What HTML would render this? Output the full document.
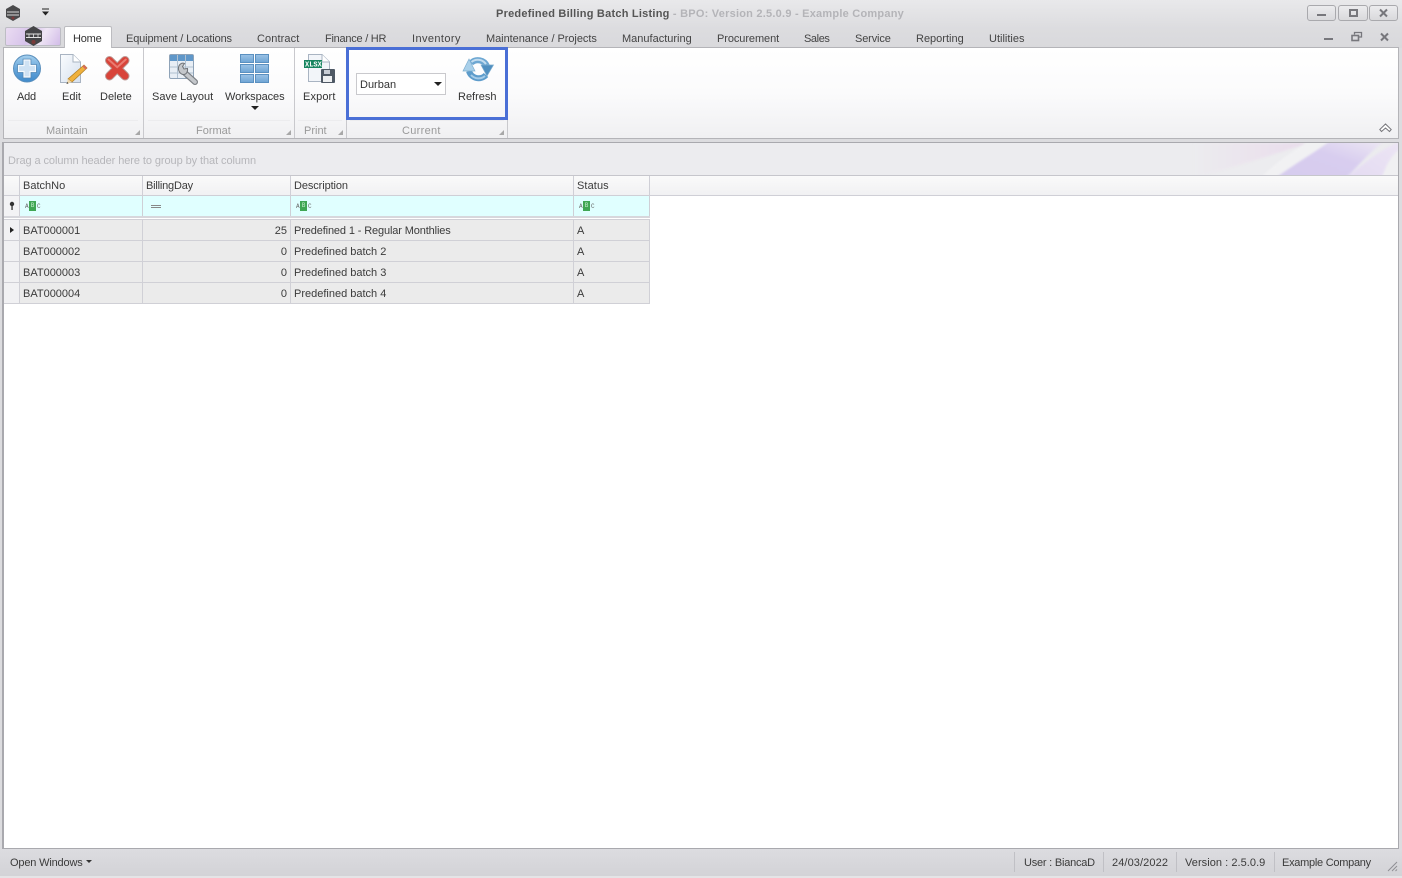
<!DOCTYPE html>
<html><head><meta charset="utf-8"><style>
html,body{margin:0;padding:0}
body{width:1402px;height:878px;position:relative;overflow:hidden;background:#dcdcdf;font:11px/13px "Liberation Sans",sans-serif;color:#3b3b3b}
.a{position:absolute}
.t{position:absolute;white-space:nowrap;line-height:13px}
.tab{top:33px;color:#444}
.lb{color:#333;top:91px}
.gl{color:#9a9a9a;top:125px}
.corner{position:absolute;width:0;height:0;border-left:5px solid transparent;border-bottom:5px solid #a8a8a8}
.l{position:absolute;top:202px;font:6px/9px "Liberation Mono",monospace;color:#666}
.b{position:absolute;top:201px;width:7px;height:10px;background:#3fa654;color:#c5eccd;font:6px/10px "Liberation Mono",monospace;text-align:center}
svg{position:absolute;overflow:visible}
</style></head><body>

<div class="a" style="left:0;top:0;width:1402px;height:48px;background:linear-gradient(#e9e9eb,#dcdcdf 60%,#d9d9dc)"></div>

<svg style="left:5px;top:5px" width="16" height="17" viewBox="0 0 16 17"><path d="M8 0 15 4V12L8 16 1 12V4Z" fill="#4a4a4c"/><path d="M2 7H14M2 10H14" stroke="#d8d8d8" stroke-width="1"/><circle cx="8" cy="13" r="1.5" fill="#7a3a3a"/></svg>
<svg style="left:41px;top:9px" width="9" height="8"><path d="M1 0H8" stroke="#222"/><path d="M1 2.5H8L4.5 6.5Z" fill="#222"/></svg>

<div class="t" style="left:496px;top:8px;font-weight:bold;color:#555;letter-spacing:.23px">Predefined Billing Batch Listing<span style="color:#b4b4b8"> - BPO: Version 2.5.0.9 - Example Company</span></div>

<div class="a" style="left:1307px;top:5px;width:27px;height:14px;border:1px solid #a9a9ad;border-radius:3px;background:linear-gradient(#ececee,#d9d9dc)"></div>
<div class="a" style="left:1338px;top:5px;width:28px;height:14px;border:1px solid #a9a9ad;border-radius:3px;background:linear-gradient(#ececee,#d9d9dc)"></div>
<div class="a" style="left:1369px;top:5px;width:27px;height:14px;border:1px solid #a9a9ad;border-radius:3px;background:linear-gradient(#ececee,#d9d9dc)"></div>
<div class="a" style="left:1317px;top:14px;width:9px;height:2px;background:#77777c"></div>
<div class="a" style="left:1349px;top:9px;width:5px;height:4px;border:2px solid #77777c"></div>
<svg style="left:1379px;top:9px" width="9" height="8"><path d="M1 0.5 8 7.5M8 0.5 1 7.5" stroke="#77777c" stroke-width="2"/></svg>

<div class="a" style="left:1324px;top:38px;width:9px;height:1.5px;background:#77777c"></div>
<svg style="left:1351px;top:32px" width="11" height="10"><path d="M3.5 2.5V.5H10.5V5H8" fill="none" stroke="#77777c" stroke-width="1.3"/><rect x="1" y="3.5" width="6.5" height="5" fill="none" stroke="#77777c" stroke-width="1.6"/></svg>
<svg style="left:1380px;top:33px" width="9" height="8"><path d="M1 .5 8 7.5M8 .5 1 7.5" stroke="#77777c" stroke-width="2"/></svg>

<div class="a" style="left:5px;top:27px;width:54px;height:17px;border:1px solid #bdbdc4;border-radius:2px;background:linear-gradient(120deg,#eadcf2,#d6c2ea 45%,#efe6f5 65%,#d2bce8)"></div>
<svg style="left:24px;top:26px" width="19" height="21" viewBox="0 0 19 21"><path d="M9.5 0 18 5V15L9.5 20 1 15V5Z" fill="#454547"/><path d="M2 8H17M2 11.5H17" stroke="#e2e2e2" stroke-width="1"/><path d="M5 8V11.5M9.5 8V11.5M14 8V11.5" stroke="#e2e2e2" stroke-width=".8"/><circle cx="9.5" cy="16" r="2" fill="#7a3a3a"/></svg>

<div class="a" style="left:3px;top:47px;width:1396px;height:92px;box-sizing:border-box;border:1px solid #b4b4b8;background:linear-gradient(#ffffff,#fbfbfc 50%,#f0f0f2)"></div>
<div class="a" style="left:64px;top:26px;width:48px;height:22px;box-sizing:border-box;border:1px solid #bcbcc0;border-bottom:0;border-radius:2px 2px 0 0;background:#fff"></div>

<div class="t tab" style="left:73px;color:#333;letter-spacing:-.2px">Home</div>
<div class="t tab" style="left:126px;letter-spacing:-.14px">Equipment / Locations</div>
<div class="t tab" style="left:257px;letter-spacing:.1px">Contract</div>
<div class="t tab" style="left:325px;letter-spacing:-.25px">Finance / HR</div>
<div class="t tab" style="left:412px;letter-spacing:.4px">Inventory</div>
<div class="t tab" style="left:486px;letter-spacing:-.05px">Maintenance / Projects</div>
<div class="t tab" style="left:622px">Manufacturing</div>
<div class="t tab" style="left:717px;letter-spacing:-.08px">Procurement</div>
<div class="t tab" style="left:804px;letter-spacing:-.4px">Sales</div>
<div class="t tab" style="left:855px;letter-spacing:-.14px">Service</div>
<div class="t tab" style="left:916px">Reporting</div>
<div class="t tab" style="left:989px">Utilities</div>

<div class="a" style="left:143px;top:48px;width:1px;height:90px;background:#c9c9cd"></div>
<div class="a" style="left:294px;top:48px;width:1px;height:90px;background:#c9c9cd"></div>
<div class="a" style="left:346px;top:48px;width:1px;height:90px;background:#c9c9cd"></div>
<div class="a" style="left:507px;top:48px;width:1px;height:90px;background:#c9c9cd"></div>
<div class="a" style="left:8px;top:120px;width:130px;height:1px;background:#ececee"></div>
<div class="a" style="left:148px;top:120px;width:142px;height:1px;background:#ececee"></div>
<div class="a" style="left:298px;top:120px;width:44px;height:1px;background:#ececee"></div>
<div class="a" style="left:350px;top:120px;width:154px;height:1px;background:#ececee"></div>

<svg style="left:13px;top:54px" width="29" height="29" viewBox="0 0 29 29"><defs><linearGradient id="g1" x1="0" y1="0" x2="0" y2="1"><stop offset="0" stop-color="#a6d0ee"/><stop offset=".5" stop-color="#6aa8dc"/><stop offset="1" stop-color="#3f8acb"/></linearGradient></defs><circle cx="14" cy="14.5" r="13.5" fill="url(#g1)" stroke="#5a8fbc"/><path d="M11 6H17V11.5H22.5V17.5H17V23H11V17.5H5.5V11.5H11Z" fill="#6fa6d6" stroke="#4c80ad" stroke-width="2.6"/><path d="M11 6H17V11.5H22.5V17.5H17V23H11V17.5H5.5V11.5H11Z" fill="#cfe2f3" stroke="#f6fafd" stroke-width="1.2"/></svg>

<svg style="left:59px;top:53px" width="30" height="32" viewBox="0 0 30 32"><defs><linearGradient id="g2" x1="0" y1="0" x2="1" y2="1"><stop offset="0" stop-color="#fafcfe"/><stop offset="1" stop-color="#d5e0ee"/></linearGradient></defs><path d="M1.5 1.5H14L21.5 9V29.5H1.5Z" fill="url(#g2)" stroke="#a9b4c2"/><path d="M14 1.5V9H21.5" fill="#fff" stroke="#a9b4c2"/><path d="M25 12 28 15 13 29 9 26Z" fill="#f0b13c" stroke="#b28128" stroke-width=".8"/><path d="M25 12 28 15 26.5 16.5 23.5 13.5Z" fill="#d9695c"/><path d="M9 26 13 29 7.5 31Z" fill="#eed5a8"/><path d="M8.2 29 9.5 30.3 7.5 31Z" fill="#333"/></svg>

<svg style="left:104px;top:55px" width="28" height="28" viewBox="0 0 28 28"><path d="M5.5 5.5 21 21M21 5.5 5.5 21" stroke="#bb9a96" stroke-width="9" stroke-linecap="round"/><path d="M5.5 5.5 21 21M21 5.5 5.5 21" stroke="#d8443a" stroke-width="7" stroke-linecap="round"/><path d="M4.5 4.5 13.2 12.2 21.8 4.5" stroke="#ea7c72" stroke-width="2" fill="none" stroke-linecap="round"/></svg>

<svg style="left:169px;top:54px" width="29" height="30" viewBox="0 0 29 30"><rect x=".5" y=".5" width="24" height="24" rx="1.5" fill="#e8eef5" stroke="#8fa3b8"/><rect x="1" y="1" width="23" height="6" fill="#5f97c9"/><path d="M1 13H24M1 19H24M8.5 1V24M16.5 1V24" stroke="#b0c0d0"/><path d="M16 19 26 28" stroke="#7c8085" stroke-width="6" stroke-linecap="round"/><path d="M16 19 26 28" stroke="#c4c7cb" stroke-width="3.6" stroke-linecap="round"/><path d="M9.5 13.5C10 10 13 8.5 15.5 9.5L13.5 12.5 15 15 18.5 14.5C19 17.5 17.5 20.5 14.5 20.5 11.5 20.5 9 17 9.5 13.5Z" fill="#c4c7cb" stroke="#6f7378"/></svg>

<svg style="left:240px;top:54px" width="30" height="30" viewBox="0 0 30 30"><defs><linearGradient id="g3" x1="0" y1="0" x2="0" y2="1"><stop offset="0" stop-color="#9cc3e6"/><stop offset="1" stop-color="#6ea4d4"/></linearGradient></defs><g fill="url(#g3)" stroke="#5a90c0"><rect x=".5" y=".5" width="13" height="8"/><rect x="15.5" y=".5" width="13" height="8"/><rect x=".5" y="10.5" width="13" height="8"/><rect x="15.5" y="10.5" width="13" height="8"/><rect x=".5" y="20.5" width="13" height="8"/><rect x="15.5" y="20.5" width="13" height="8"/></g></svg>
<div class="a" style="left:251px;top:106px;width:0;height:0;border:4px solid transparent;border-top:4px solid #222;border-bottom:0"></div>

<svg style="left:304px;top:54px" width="31" height="30" viewBox="0 0 31 30"><path d="M4.5 .5H18L25.5 8V27.5H4.5Z" fill="#f2f5f9" stroke="#a9b4c2"/><path d="M18 .5V8H25.5" fill="#fff" stroke="#a9b4c2"/><rect x="0" y="6" width="18" height="8" fill="#17855f"/><text x="1" y="12.5" font-family="Liberation Mono,monospace" font-size="7" font-weight="bold" fill="#fff">XLSX</text><rect x="17" y="15" width="14" height="14" rx="1" fill="#4f5965"/><rect x="20" y="16" width="6" height="4" fill="#c9ced6"/><rect x="19" y="22" width="9" height="6" fill="#eef0f2"/></svg>

<div class="a" style="left:346px;top:47px;width:162px;height:73px;box-sizing:border-box;border:3px solid #4a6fd6"></div>
<div class="a" style="left:356px;top:73px;width:90px;height:22px;box-sizing:border-box;border:1px solid #c9c9cd;background:#fff"></div>
<div class="t" style="left:360px;top:79px;color:#333">Durban</div>
<div class="a" style="left:434px;top:82px;width:0;height:0;border:4px solid transparent;border-top:4px solid #222;border-bottom:0"></div>

<svg style="left:462px;top:55px" width="32" height="28" viewBox="0 0 32 28"><path d="M9 8A10 10 0 0 1 25 11" fill="none" stroke="#6da7d2" stroke-width="6"/><path d="M24 20A10 10 0 0 1 7 16" fill="none" stroke="#5d9ccb" stroke-width="6"/><path d="M9.5 7A10 10 0 0 1 24 9" fill="none" stroke="#c2dcef" stroke-width="2"/><path d="M23 21A10 10 0 0 1 9 20" fill="none" stroke="#a6cce8" stroke-width="2"/><path d="M1 16 13 16 7 4Z" fill="#a9d0ea" stroke="#7eaecf" stroke-width=".7"/><path d="M19 10 31.500 10 25 21Z" fill="#4f8fc0" stroke="#7eaecf" stroke-width=".7"/></svg>

<div class="t lb" style="left:17px;letter-spacing:-.2px">Add</div>
<div class="t lb" style="left:62px">Edit</div>
<div class="t lb" style="left:100px">Delete</div>
<div class="t lb" style="left:152px">Save Layout</div>
<div class="t lb" style="left:225px;letter-spacing:-.08px">Workspaces</div>
<div class="t lb" style="left:303px;letter-spacing:.12px">Export</div>
<div class="t lb" style="left:458px">Refresh</div>

<div class="t gl" style="left:46px">Maintain</div>
<div class="t gl" style="left:196px">Format</div>
<div class="t gl" style="left:304px">Print</div>
<div class="t gl" style="left:402px;letter-spacing:.3px">Current</div>
<div class="corner" style="left:135px;top:130px"></div>
<div class="corner" style="left:286px;top:130px"></div>
<div class="corner" style="left:338px;top:130px"></div>
<div class="corner" style="left:499px;top:130px"></div>

<svg style="left:1379px;top:123px" width="13" height="11"><path d="M.8 6.5 6.5 1 12.2 6.5 10.5 8.5 6.5 5 2.5 8.5Z" fill="#fff" stroke="#77777c" stroke-width="1"/></svg>

<div class="a" style="left:2px;top:142px;width:1397px;height:707px;box-sizing:border-box;border:1px solid #a9a9ae;border-left-width:2px;background:#fff"></div>

<div class="a" style="left:4px;top:143px;width:1394px;height:33px;box-sizing:border-box;border-bottom:1px solid #c6c6cc;background:#ececef;overflow:hidden">
<svg style="left:1170px;top:0;filter:blur(1px)" width="224" height="32" viewBox="0 0 224 32"><defs><linearGradient id="p1" x1="0" y1="0" x2="1" y2="0"><stop offset="0" stop-color="#ececef"/><stop offset="1" stop-color="#eadcec"/></linearGradient><linearGradient id="p2" x1="0" y1="1" x2="1" y2="0"><stop offset="0" stop-color="#d6ccee"/><stop offset=".55" stop-color="#d8cdef"/><stop offset="1" stop-color="#ede8f4"/></linearGradient><linearGradient id="p3" x1="0" y1="1" x2="1" y2="0"><stop offset="0" stop-color="#e4dbf2"/><stop offset="1" stop-color="#ece5f4"/></linearGradient></defs><path d="M30 32C60 24 105 10 134 0H20V40H30Z" fill="url(#p1)"/><path d="M88 34C100 20 120 8 134 -2H156C140 10 125 18 103 34Z" fill="#f1f1f3"/><path d="M103 34C125 18 140 10 156 -2H210C195 10 185 22 173 34Z" fill="url(#p2)"/><path d="M173 34C190 20 205 8 226 -2V6C215 14 212 24 208 34Z" fill="url(#p3)"/><path d="M208 34C212 24 216 14 226 6V34Z" fill="#f0f0f2"/></svg>
</div>
<div class="t" style="left:8px;top:155px;color:#b6b6ba;letter-spacing:-.08px">Drag a column header here to group by that column</div>

<div class="a" style="left:4px;top:176px;width:1394px;height:20px;box-sizing:border-box;border-bottom:1px solid #cfcfd6;background:linear-gradient(#fafafa,#f1f1f3)"></div>
<div class="a" style="left:19px;top:176px;width:1px;height:20px;background:#cfcfd6"></div>
<div class="a" style="left:142px;top:176px;width:1px;height:20px;background:#cfcfd6"></div>
<div class="a" style="left:290px;top:176px;width:1px;height:20px;background:#cfcfd6"></div>
<div class="a" style="left:573px;top:176px;width:1px;height:20px;background:#cfcfd6"></div>
<div class="a" style="left:649px;top:176px;width:1px;height:20px;background:#cfcfd6"></div>
<div class="t" style="left:23px;top:180px">BatchNo</div>
<div class="t" style="left:146px;top:180px;letter-spacing:-.2px">BillingDay</div>
<div class="t" style="left:294px;top:180px;letter-spacing:-.1px">Description</div>
<div class="t" style="left:577px;top:180px;letter-spacing:.1px">Status</div>

<div class="a" style="left:4px;top:196px;width:16px;height:20px;box-sizing:border-box;background:#f3f3f5;border-right:1px solid #cfcfd6"></div>
<div class="a" style="left:20px;top:196px;width:630px;height:20px;box-sizing:border-box;background:#e0ffff;border-right:1px solid #cfcfd6"></div>
<div class="a" style="left:142px;top:196px;width:1px;height:20px;background:#cfcfd6"></div>
<div class="a" style="left:290px;top:196px;width:1px;height:20px;background:#cfcfd6"></div>
<div class="a" style="left:573px;top:196px;width:1px;height:20px;background:#cfcfd6"></div>
<div class="a" style="left:4px;top:216px;width:646px;height:2px;background:#d7d7dc"></div>
<svg style="left:9px;top:202px" width="6" height="8"><circle cx="3" cy="2" r="2.2" fill="#333"/><rect x="2.4" y="3" width="1.3" height="5" fill="#333"/></svg>

<div class="l" style="left:25px">A</div>
<div class="b" style="left:29px">B</div>
<div class="l" style="left:37px">C</div>
<div class="a" style="left:151px;top:205px;width:10px;height:1px;background:#888"></div>
<div class="a" style="left:151px;top:207px;width:10px;height:1px;background:#888"></div>
<div class="l" style="left:296px">A</div>
<div class="b" style="left:300px">B</div>
<div class="l" style="left:308px">C</div>
<div class="l" style="left:579px">A</div>
<div class="b" style="left:583px">B</div>
<div class="l" style="left:591px">C</div>

<div class="a" style="left:4px;top:219px;width:16px;height:85px;background:#f1f1f3"></div>
<div class="a" style="left:20px;top:219px;width:630px;height:85px;background:#ebebeb"></div>
<div class="a" style="left:4px;top:219px;width:646px;height:1px;background:#d0d0d6"></div>
<div class="a" style="left:4px;top:240px;width:646px;height:1px;background:#d0d0d6"></div>
<div class="a" style="left:4px;top:261px;width:646px;height:1px;background:#d0d0d6"></div>
<div class="a" style="left:4px;top:282px;width:646px;height:1px;background:#d0d0d6"></div>
<div class="a" style="left:4px;top:303px;width:646px;height:1px;background:#d0d0d6"></div>
<div class="a" style="left:19px;top:219px;width:1px;height:85px;background:#d0d0d6"></div>
<div class="a" style="left:142px;top:219px;width:1px;height:85px;background:#d0d0d6"></div>
<div class="a" style="left:290px;top:219px;width:1px;height:85px;background:#d0d0d6"></div>
<div class="a" style="left:573px;top:219px;width:1px;height:85px;background:#d0d0d6"></div>
<div class="a" style="left:649px;top:219px;width:1px;height:85px;background:#d0d0d6"></div>
<div class="a" style="left:10px;top:227px;width:0;height:0;border:3.5px solid transparent;border-left:4px solid #222;border-right:0"></div>

<div class="t" style="left:23px;top:225px">BAT000001</div>
<div class="t" style="right:1115px;top:225px">25</div>
<div class="t" style="left:294px;top:225px;letter-spacing:-.13px">Predefined 1 - Regular Monthlies</div>
<div class="t" style="left:577px;top:225px">A</div>
<div class="t" style="left:23px;top:246px">BAT000002</div>
<div class="t" style="right:1115px;top:246px">0</div>
<div class="t" style="left:294px;top:246px">Predefined batch 2</div>
<div class="t" style="left:577px;top:246px">A</div>
<div class="t" style="left:23px;top:267px">BAT000003</div>
<div class="t" style="right:1115px;top:267px">0</div>
<div class="t" style="left:294px;top:267px">Predefined batch 3</div>
<div class="t" style="left:577px;top:267px">A</div>
<div class="t" style="left:23px;top:288px">BAT000004</div>
<div class="t" style="right:1115px;top:288px">0</div>
<div class="t" style="left:294px;top:288px">Predefined batch 4</div>
<div class="t" style="left:577px;top:288px">A</div>

<div class="a" style="left:0;top:849px;width:1402px;height:29px;background:linear-gradient(#dcdce0,#d2d2d6)"></div>
<div class="a" style="left:0;top:876px;width:1402px;height:2px;background:#e4e4e6"></div>
<div class="t" style="left:10px;top:857px;letter-spacing:-.17px">Open Windows</div>
<div class="a" style="left:86px;top:860px;width:0;height:0;border:3.5px solid transparent;border-top:3.5px solid #333;border-bottom:0"></div>
<div class="a" style="left:1014px;top:852px;width:1px;height:20px;background:#c0c0c5"></div>
<div class="a" style="left:1103px;top:852px;width:1px;height:20px;background:#c0c0c5"></div>
<div class="a" style="left:1176px;top:852px;width:1px;height:20px;background:#c0c0c5"></div>
<div class="a" style="left:1274px;top:852px;width:1px;height:20px;background:#c0c0c5"></div>
<div class="t" style="left:1024px;top:857px;letter-spacing:-.22px">User : BiancaD</div>
<div class="t" style="left:1112px;top:857px;letter-spacing:.1px">24/03/2022</div>
<div class="t" style="left:1185px;top:857px;letter-spacing:.05px">Version : 2.5.0.9</div>
<div class="t" style="left:1282px;top:857px;letter-spacing:-.27px">Example Company</div>
<svg style="left:1387px;top:861px" width="11" height="11"><path d="M1 10 10 1M5 10 10 5M8.5 10 10 8.5" stroke="#8f8f94" stroke-width="1"/></svg>

</body></html>
